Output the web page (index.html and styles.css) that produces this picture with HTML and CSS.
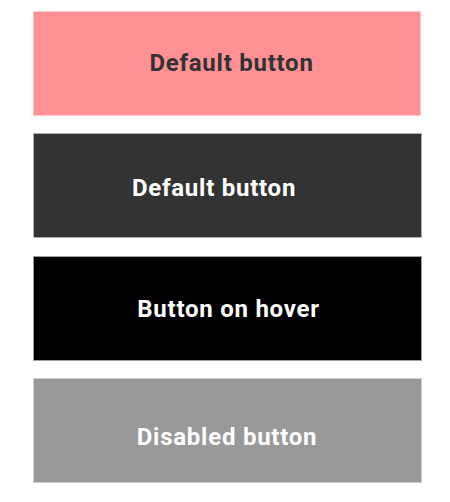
FILE: index.html
```html
<!DOCTYPE html>
<html>
<head>
<meta charset="utf-8">
<link rel="stylesheet" href="styles.css">
</head>
<body>
<div class="stack">
  <button class="btn btn-default btn-shift-r">Default button</button>
  <button class="btn btn-dark btn-shift-l">Default button</button>
  <button class="btn btn-hover btn-shift-s">Button on hover</button>
  <button class="btn btn-disabled btn-shift-d" disabled>Disabled button</button>
</div>
</body>
</html>
```
FILE: styles.css
```css
html, body {
  margin: 0;
  padding: 0;
  background: #ffffff;
}
.stack {
  display: flex;
  flex-direction: column;
  gap: 17.5px;
  padding: 10.5px 0 0 32.5px;
}
.btn {
  width: 389px;
  height: 105px;
  box-sizing: border-box;
  font-family: Roboto, "Liberation Sans", sans-serif;
  font-weight: 700;
  font-size: 24px;
  letter-spacing: 0.75px;
  border: 1px solid #bdbdbd;
  margin: 0;
  display: flex;
  align-items: center;
  justify-content: center;
  cursor: pointer;
}
.btn-default {
  background: #ff9194;
  color: #333333;
  border-color: #ffc9cb;
  width: 388px;
}
.btn-dark {
  background: #333333;
  color: #ffffff;
  border-color: #b0b0b0;
}
.btn-hover {
  background: #000000;
  color: #ffffff;
  border-color: #a0a0a0;
}
.btn-disabled {
  background: #999999;
  color: #ffffff;
  border-color: #cfcfcf;
  cursor: default;
}
.btn-shift-r { padding: 0 0 0 10px; }
.btn-shift-l { padding: 4px 26px 0 0; }
.btn-shift-s { padding: 2px 0 0 3px; }
.btn-shift-d { padding: 12px 0 0 0; }
```
